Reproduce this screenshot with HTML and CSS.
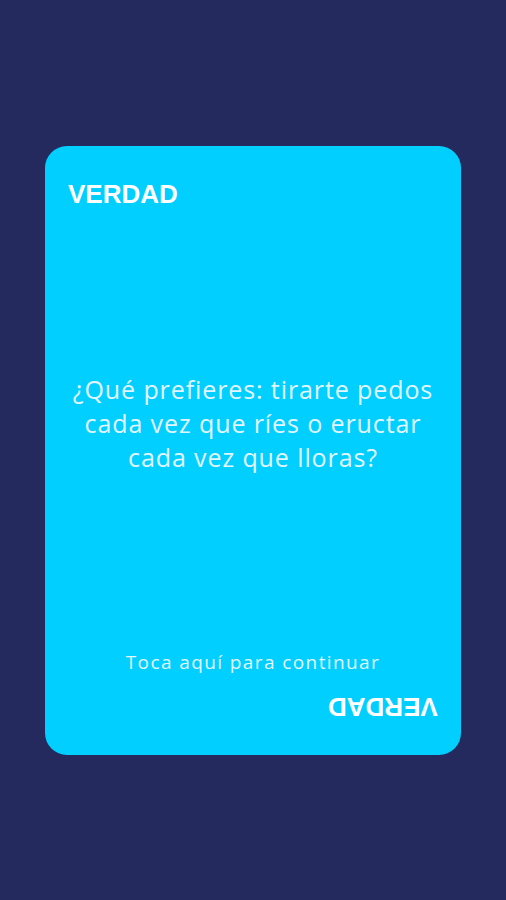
FILE: index.html
```html
<!DOCTYPE html>
<html lang="es">
<head>
<meta charset="utf-8">
<title>Verdad</title>
<link rel="stylesheet" href="styles.css">
</head>
<body>
<main class="screen">
  <section class="card">
    <div class="card-label">VERDAD</div>
    <div class="card-body">
      <p class="question">¿Qué prefieres: tirarte pedos<br>cada vez que ríes o eructar<br>cada vez que lloras?</p>
    </div>
    <div class="card-hint">Toca aquí para continuar</div>
    <div class="card-label card-label-flipped">VERDAD</div>
  </section>
</main>
</body>
</html>
```
FILE: styles.css
```css
html, body {
  margin: 0;
  padding: 0;
  background: #252a5e;
}
.screen {
  width: 506px;
  height: 900px;
  display: flex;
  align-items: center;
  justify-content: center;
}
.card {
  box-sizing: border-box;
  width: 416px;
  height: 609px;
  background: #00cfff;
  border-radius: 22px;
  padding: 33px 23px 33px;
  display: flex;
  flex-direction: column;
}
.card-label {
  font-family: "Liberation Sans", Arial, sans-serif;
  font-weight: bold;
  font-size: 26px;
  line-height: 30px;
  color: #ffffff;
  letter-spacing: 0;
}
.card-label-flipped {
  align-self: flex-end;
  transform: rotate(180deg);
}
.card-body {
  flex: 1;
  display: flex;
  align-items: center;
  justify-content: center;
}
.question {
  margin: 0 0 13px;
  font-family: "Open Sans", "Noto Sans", sans-serif;
  font-size: 25px;
  line-height: 34px;
  letter-spacing: 0.9px;
  color: #e3f6ff;
  text-align: center;
  white-space: nowrap;
}
.card-hint {
  font-family: "Open Sans", "Noto Sans", sans-serif;
  font-size: 19px;
  line-height: 22px;
  letter-spacing: 1.4px;
  color: #e3f6ff;
  text-align: center;
  margin-bottom: 19px;
}
```
